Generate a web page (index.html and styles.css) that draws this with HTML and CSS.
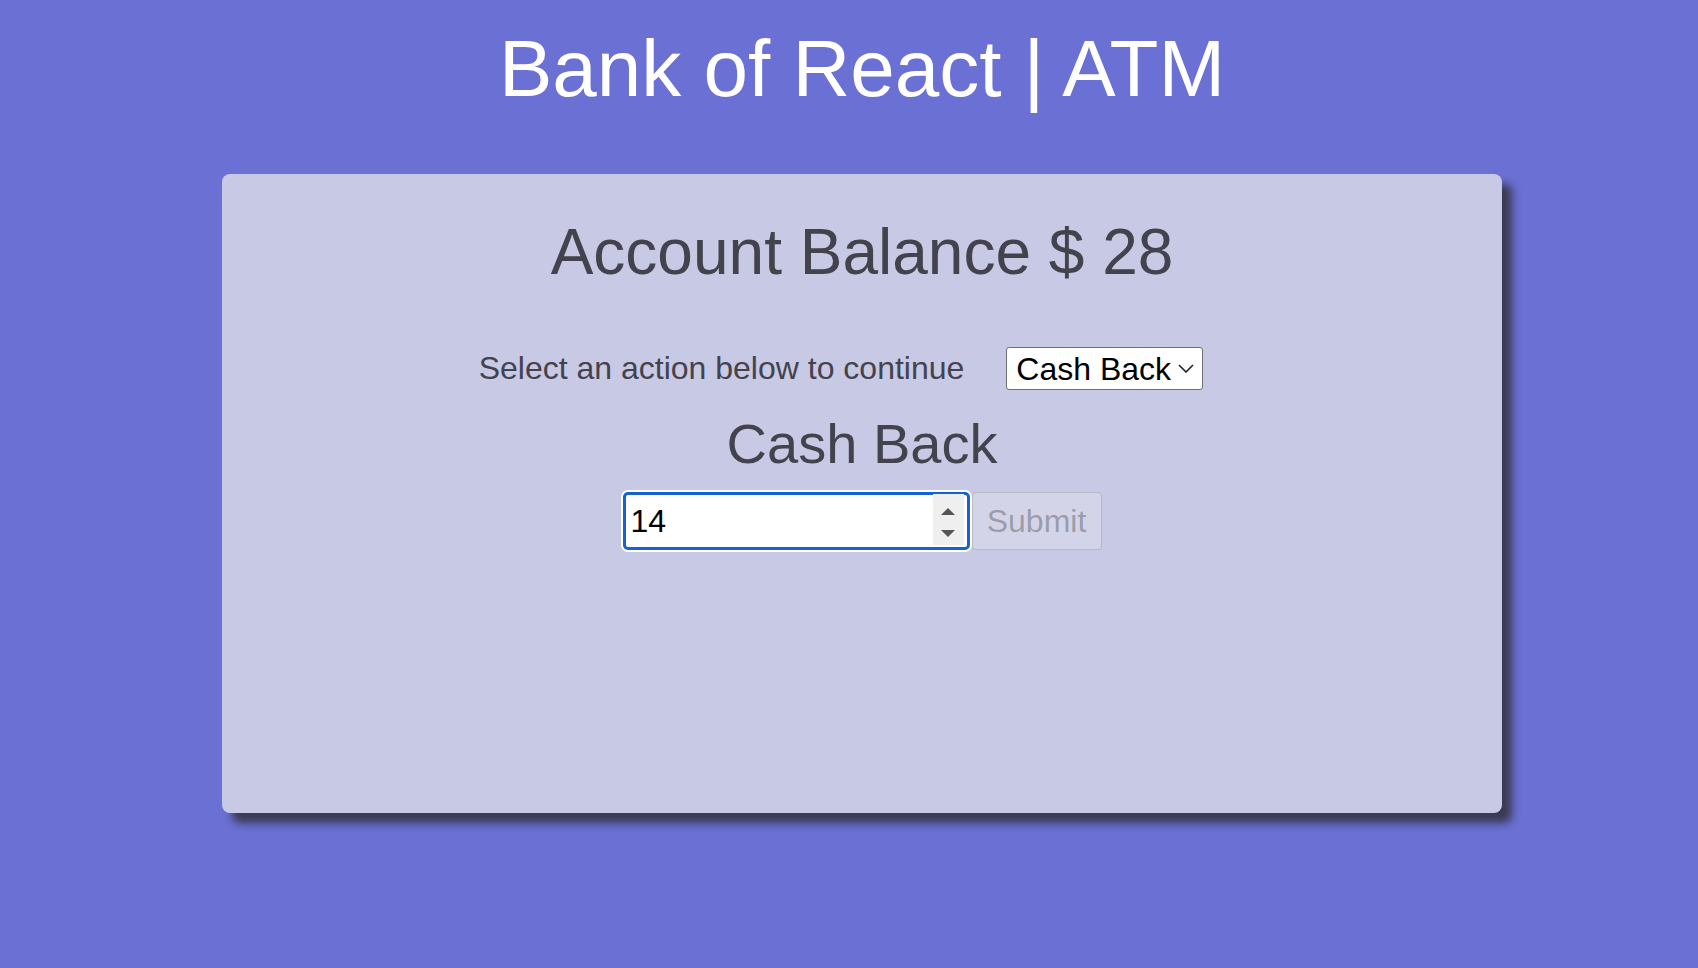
FILE: index.html
```html
<!DOCTYPE html>
<html lang="en">
<head>
<meta charset="utf-8">
<title>Bank of React | ATM</title>
<link rel="stylesheet" href="styles.css">
</head>
<body>
<header class="site-header">
  <h1 class="site-title">Bank of React | ATM</h1>
</header>
<main class="atm-card">
  <h2 class="balance">Account Balance $ 28</h2>
  <div class="action-row">
    <label class="action-label" for="action">Select an action below to continue</label>
    <div class="select-wrap">
      <select id="action" class="action-select">
        <option>Cash Back</option>
        <option>Deposit</option>
        <option>Withdraw</option>
      </select>
      <svg class="select-chevron" width="16" height="9" viewBox="0 0 16 9" aria-hidden="true">
        <path d="M1 1 L8 8 L15 1" fill="none" stroke="#222" stroke-width="1.6"/>
      </svg>
    </div>
  </div>
  <h3 class="form-title">Cash Back</h3>
  <form class="amount-form">
    <div class="amount-wrap">
      <input class="amount-input" type="number" value="14">
      <div class="spinner" aria-hidden="true">
        <svg class="spin-up" width="14" height="7" viewBox="0 0 14 7"><path d="M0 7 L7 0 L14 7 Z" fill="#555"/></svg>
        <svg class="spin-down" width="14" height="7" viewBox="0 0 14 7"><path d="M0 0 L14 0 L7 7 Z" fill="#555"/></svg>
      </div>
    </div>
    <button class="submit-btn" type="submit" disabled>Submit</button>
  </form>
</main>
</body>
</html>
```
FILE: styles.css
```css
html, body {
  margin: 0;
  padding: 0;
}
body {
  background: #6b70d4;
  font-family: "Liberation Sans", Arial, sans-serif;
  padding-left: 26px;
  min-height: 968px;
  box-sizing: border-box;
}
.site-header {
  padding-top: 29px;
  text-align: center;
}
.site-title {
  margin: 0;
  font-size: 80px;
  line-height: 80px;
  font-weight: normal;
  color: #ffffff;
}
.atm-card {
  width: 1280px;
  height: 639px;
  box-sizing: border-box;
  margin: 65px auto 0;
  padding-top: 46px;
  background: #c8c9e4;
  border-radius: 8px;
  box-shadow: 10px 10px 8px rgba(52, 52, 68, 0.9);
  color: #43434e;
  display: flex;
  flex-direction: column;
  align-items: center;
}
.balance {
  margin: 0;
  font-size: 64px;
  line-height: 64px;
  font-weight: normal;
}
.action-row {
  margin-top: 63px;
  height: 43px;
  display: flex;
  align-items: center;
}
.action-label {
  font-size: 32px;
  line-height: 43px;
}
.select-wrap {
  position: relative;
  margin: 0 42px;
}
.action-select {
  -webkit-appearance: none;
  appearance: none;
  display: block;
  width: 197px;
  height: 43px;
  box-sizing: border-box;
  border: 1px solid #6f6f6f;
  border-radius: 3px;
  background: #ffffff;
  color: #000000;
  font-family: "Liberation Sans", Arial, sans-serif;
  font-size: 32px;
  padding: 0 0 0 9px;
  margin: 0;
}
.select-chevron {
  position: absolute;
  right: 9px;
  top: 17px;
  pointer-events: none;
}
.form-title {
  margin: 26px 0 0;
  font-size: 56px;
  line-height: 56px;
  font-weight: normal;
}
.amount-form {
  margin-top: 20px;
  display: flex;
  gap: 2px;
}
.amount-wrap {
  position: relative;
}
.amount-input {
  display: block;
  width: 347px;
  height: 58px;
  box-sizing: border-box;
  border: 3px solid #1662d2;
  border-radius: 5px;
  box-shadow: 0 0 0 2px #ffffff;
  background: #ffffff;
  color: #000000;
  font-family: "Liberation Sans", Arial, sans-serif;
  font-size: 32px;
  padding: 0 40px 0 5px;
  margin: 0;
  outline: none;
  -moz-appearance: textfield;
  appearance: textfield;
}
.amount-input::-webkit-inner-spin-button,
.amount-input::-webkit-outer-spin-button {
  -webkit-appearance: none;
  margin: 0;
}
.spinner {
  position: absolute;
  top: 2px;
  right: 6px;
  width: 31px;
  height: 51px;
  background: #efefef;
}
.spin-up {
  position: absolute;
  left: 8px;
  top: 14px;
}
.spin-down {
  position: absolute;
  left: 8px;
  top: 36px;
}
.submit-btn {
  width: 130px;
  height: 58px;
  box-sizing: border-box;
  border: 1px solid rgba(118, 118, 118, 0.3);
  border-radius: 4px;
  background: rgba(239, 239, 239, 0.3);
  color: rgba(16, 16, 16, 0.3);
  font-family: "Liberation Sans", Arial, sans-serif;
  font-size: 32px;
  padding: 0;
  margin: 0;
}
```
